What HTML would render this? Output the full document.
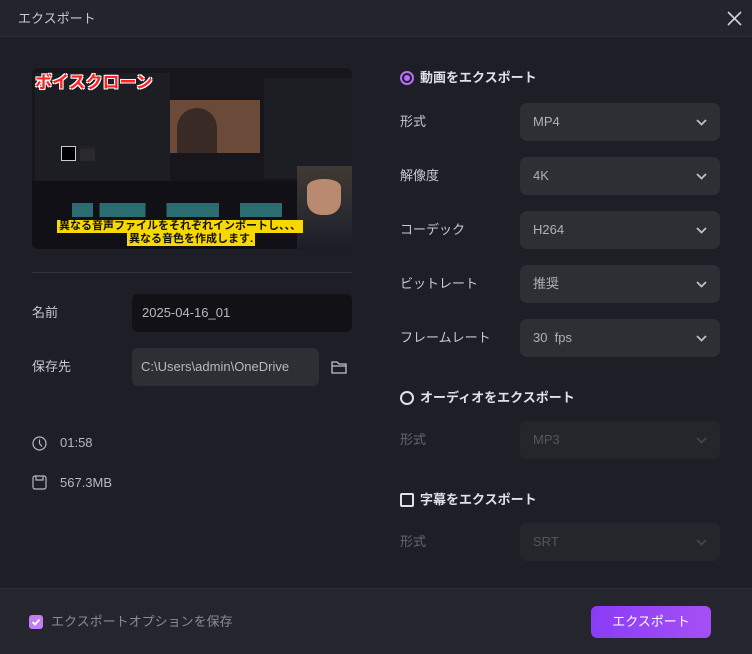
<!DOCTYPE html>
<html><head><meta charset="utf-8"><style>
*{box-sizing:border-box;margin:0;padding:0}
body{width:752px;height:654px;background:#1e1e26;font-family:"Liberation Sans","Noto Sans CJK JP",sans-serif;color:#c8c8d0;position:relative;overflow:hidden;font-size:13px;line-height:16px}
.abs{position:absolute}
.hdr{left:0;top:0;width:752px;height:37px;background:#24242c;border-bottom:1px solid #2c2c34}
.lbl{font-size:13px;color:#c8c8d0}
.dd{left:520px;width:200px;height:38px;border-radius:7px;background:#2e2e35;color:#b0b0b8;font-size:13px;padding:11px 13px 0}
.dd.dis{background:#25252c;color:#55555c}
.dd svg{position:absolute;right:13px;top:16px}
.dd.dis svg path{stroke:#44444b}
.foot{left:0;top:588px;width:752px;height:66px;background:#25252d;border-top:1px solid #2e2e36}
</style></head><body>
<div class="abs hdr"><span class="abs" style="left:18px;top:11px;font-size:13px;color:#c8c8d0">エクスポート</span>
<svg class="abs" style="left:727px;top:11px" width="15" height="15"><path d="M1 1L14 14M14 1L1 14" stroke="#d0d0d8" stroke-width="1.6"/></svg></div>

<div class="abs" style="left:32px;top:68px;width:320px;height:181px;background:#16161c;border-radius:6px;overflow:hidden">
 <div class="abs" style="left:3px;top:5px;width:135px;height:108px;background:#1d1d24"></div>
 <div class="abs" style="left:138px;top:32px;width:90px;height:53px;background:#6b4a3a"></div>
 <div class="abs" style="left:145px;top:40px;width:40px;height:45px;background:#3a2a25;border-radius:20px 20px 0 0"></div>
 <div class="abs" style="left:232px;top:10px;width:88px;height:100px;background:#1d1d24"></div>
 <div class="abs" style="left:29px;top:78px;width:15px;height:15px;border:1px solid #ccc;background:#000"></div>
 <div class="abs" style="left:48px;top:78px;width:15px;height:15px;background:#2a2a2a;border-top:3px solid #222"></div>
 <div class="abs" style="left:0;top:113px;width:320px;height:68px;background:#101016"></div>
 <div class="abs" style="left:40px;top:135px;width:210px;height:14px;background:linear-gradient(90deg,#2a6c6f 0 10%,#101016 10% 13%,#2a6c6f 13% 35%,#101016 35% 45%,#2a6c6f 45% 70%,#101016 70% 80%,#2a6c6f 80%)"></div>
 <div class="abs" style="left:50px;top:153px;width:210px;height:12px;background:#6a4a35"></div>
 <div class="abs" style="left:265px;top:98px;width:55px;height:83px;background:linear-gradient(#403a35,#2a2a30 60%,#1a1d28)"></div>
 <div class="abs" style="left:275px;top:103px;width:34px;height:44px;background:#b98a70;border-radius:16px 16px 14px 14px;border-top:8px solid #3a3630"></div>
 <div class="abs" style="left:3px;top:5px;font-size:17px;line-height:20px;font-weight:bold;color:#ff2020;text-shadow:-1px -1px 0 #fff,1px -1px 0 #fff,-1px 1px 0 #fff,1px 1px 0 #fff">ボイスクローン</div>
 <div class="abs" style="left:25px;top:152px;background:#f7d800;color:#111;font-size:11px;font-weight:bold;padding:0 2px;line-height:13px">異なる音声ファイルをそれぞれインポートし、、、</div>
 <div class="abs" style="left:95px;top:165px;background:#f7d800;color:#111;font-size:11px;font-weight:bold;padding:0 2px;line-height:13px">異なる音色を作成します.</div>
</div>
<div class="abs" style="left:32px;top:272px;width:320px;height:1px;background:#33333b"></div>

<span class="abs lbl" style="left:32px;top:305px">名前</span>
<div class="abs" style="left:132px;top:294px;width:220px;height:38px;background:#121216;border-radius:6px;padding:11px 0 0 10px;color:#b8b8c0">2025-04-16_01</div>
<span class="abs lbl" style="left:32px;top:359px">保存先</span>
<div class="abs" style="left:132px;top:348px;width:187px;height:38px;background:#2e2e35;border-radius:6px;padding:11px 0 0 9px;color:#b8b8c0">C:\Users\admin\OneDrive</div>
<svg class="abs" style="left:331px;top:360px" width="17" height="15"><path d="M1 2h5l2 2h7v9H1z M1 6h14" fill="none" stroke="#c0c0c8" stroke-width="1.3"/></svg>

<svg class="abs" style="left:32px;top:436px" width="15" height="15"><circle cx="7.5" cy="7.5" r="6.5" fill="none" stroke="#b8b8c0" stroke-width="1.2"/><path d="M7.5 3.5v4l2.5 3" fill="none" stroke="#b8b8c0" stroke-width="1.2"/></svg>
<span class="abs" style="left:60px;top:435px;color:#b8b8c0">01:58</span>
<svg class="abs" style="left:32px;top:475px" width="15" height="15"><rect x="1" y="1" width="13" height="13" rx="2" fill="none" stroke="#b8b8c0" stroke-width="1.2"/><path d="M4 1v4h7V1" fill="none" stroke="#b8b8c0" stroke-width="1.2"/></svg>
<span class="abs" style="left:60px;top:475px;color:#b8b8c0">567.3MB</span>

<div class="abs" style="left:400px;top:71px;width:14px;height:14px;border-radius:50%;border:2px solid #b86ef5;background:#1e1e26"><div style="margin:2px;width:6px;height:6px;border-radius:50%;background:#b86ef5"></div></div>
<span class="abs" style="left:420px;top:70px;font-weight:bold;color:#e0e0e8">動画をエクスポート</span>

<span class="abs lbl" style="left:400px;top:114px">形式</span>
<div class="abs dd" style="top:103px">MP4<svg width="11" height="8"><path d="M1 1l4.5 4.5L10 1" fill="none" stroke="#c0c0c8" stroke-width="1.8"/></svg></div>
<span class="abs lbl" style="left:400px;top:168px">解像度</span>
<div class="abs dd" style="top:157px">4K<svg width="11" height="8"><path d="M1 1l4.5 4.5L10 1" fill="none" stroke="#c0c0c8" stroke-width="1.8"/></svg></div>
<span class="abs lbl" style="left:400px;top:222px">コーデック</span>
<div class="abs dd" style="top:211px">H264<svg width="11" height="8"><path d="M1 1l4.5 4.5L10 1" fill="none" stroke="#c0c0c8" stroke-width="1.8"/></svg></div>
<span class="abs lbl" style="left:400px;top:276px">ビットレート</span>
<div class="abs dd" style="top:265px">推奨<svg width="11" height="8"><path d="M1 1l4.5 4.5L10 1" fill="none" stroke="#c0c0c8" stroke-width="1.8"/></svg></div>
<span class="abs lbl" style="left:400px;top:330px">フレームレート</span>
<div class="abs dd" style="top:319px">30&nbsp; fps<svg width="11" height="8"><path d="M1 1l4.5 4.5L10 1" fill="none" stroke="#c0c0c8" stroke-width="1.8"/></svg></div>

<div class="abs" style="left:400px;top:391px;width:14px;height:14px;border-radius:50%;border:2px solid #e0e0e8"></div>
<span class="abs" style="left:420px;top:390px;font-weight:bold;color:#e0e0e8">オーディオをエクスポート</span>
<span class="abs" style="left:400px;top:432px;color:#66666e">形式</span>
<div class="abs dd dis" style="top:421px">MP3<svg width="11" height="8"><path d="M1 1l4.5 4.5L10 1" fill="none" stroke="#c0c0c8" stroke-width="1.8"/></svg></div>

<div class="abs" style="left:400px;top:493px;width:14px;height:14px;border-radius:2px;border:2px solid #e0e0e8"></div>
<span class="abs" style="left:420px;top:492px;font-weight:bold;color:#e0e0e8">字幕をエクスポート</span>
<span class="abs" style="left:400px;top:534px;color:#66666e">形式</span>
<div class="abs dd dis" style="top:523px">SRT<svg width="11" height="8"><path d="M1 1l4.5 4.5L10 1" fill="none" stroke="#c0c0c8" stroke-width="1.8"/></svg></div>

<div class="abs foot">
 <div class="abs" style="left:29px;top:26px;width:14px;height:14px;border-radius:3px;background:#c27ef5"><svg width="14" height="14"><path d="M3.5 7l2.5 2.5 4.5-5" fill="none" stroke="#fff" stroke-width="1.8"/></svg></div>
 <span class="abs" style="left:51px;top:25px;color:#8a8a92">エクスポートオプションを保存</span>
 <div class="abs" style="left:591px;top:17px;width:120px;height:32px;border-radius:6px;background:linear-gradient(90deg,#8a3cf6,#a54ff5);color:#fff;text-align:center;padding-top:8px">エクスポート</div>
</div>
</body></html>
